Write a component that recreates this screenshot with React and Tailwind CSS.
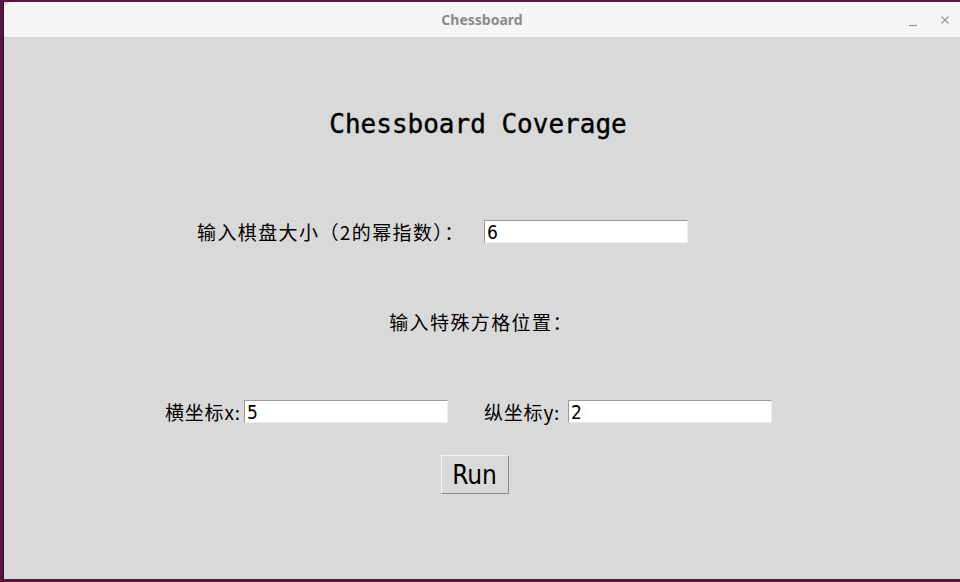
import React, { useState } from 'react';

const cjk = { fontFamily: '"Noto Sans CJK SC", "Noto Sans", sans-serif' };
const mono = { fontFamily: '"DejaVu Sans Mono", "Liberation Mono", monospace' };
const narrow = { fontFamily: '"Liberation Sans Narrow", "DejaVu Sans Condensed", "Liberation Sans", sans-serif' };

const Entry = ({ value, onChange, className }) => (
  <input
    type="text"
    value={value}
    onChange={(e) => onChange(e.target.value)}
    style={narrow}
    className={`h-[23px] w-[204px] bg-white border border-t-[#9a9a9a] border-l-[#9a9a9a] border-r-[#ececec] border-b-[#ececec] px-[2px] text-[19px] leading-none text-black outline-none ${className || ''}`}
  />
);

const TitleBar = () => (
  <div className="relative flex h-[36px] items-center justify-center rounded-tl-[8px] border-b border-[#d6d2cd] bg-[#f6f5f4]">
    <span className="text-[14px] font-bold text-[#8a8a8a]" style={{ fontFamily: '"Noto Sans", "DejaVu Sans", sans-serif' }}>
      Chessboard
    </span>
    <div className="absolute right-[10px] top-0 flex h-full items-center gap-[22px]">
      <svg width="10" height="10" viewBox="0 0 10 10" className="mt-[4px]">
        <path d="M1 8.5h8" stroke="#9a9a9a" strokeWidth="1.2" />
      </svg>
      <svg width="10" height="10" viewBox="0 0 10 10">
        <path d="M1.5 1.5l7 7M8.5 1.5l-7 7" stroke="#9a9a9a" strokeWidth="1.2" />
      </svg>
    </div>
  </div>
);

export default function App() {
  const [size, setSize] = useState('6');
  const [x, setX] = useState('5');
  const [y, setY] = useState('2');

  return (
    <div className="h-[582px] w-[960px] overflow-hidden bg-[#571640] pl-[3px] pt-[2px]">
      <div className="flex h-[577px] flex-col border-l border-[#3a0e2b] bg-[#d9d9d9]">
        <TitleBar />

        <div className="flex flex-col">
          <div
            className="mt-[71px] h-[30px] pr-[8px] text-center text-[26px] leading-[30px] text-black [-webkit-text-stroke:0.4px_black]"
            style={mono}
          >
            Chessboard Coverage
          </div>

          <div className="mt-[81px] flex h-[23px] items-center pl-[193px]">
            <span className="w-[287px] text-[19px] leading-none tracking-[1.4px] text-black" style={cjk}>
              输入棋盘大小（2的幂指数）：
            </span>
            <Entry value={size} onChange={setSize} />
          </div>

          <div className="mt-[66px] flex h-[24px] items-center justify-center pr-[2px]">
            <span className="text-[19px] leading-none tracking-[1.4px] text-black" style={cjk}>
              输入特殊方格位置：
            </span>
          </div>

          <div className="mt-[67px] flex h-[23px] items-center pl-[161px]">
            <span className="w-[79px] text-[19px] leading-none tracking-[0.8px] text-black" style={cjk}>
              横坐标x:
            </span>
            <Entry value={x} onChange={setX} />
            <span className="ml-[36px] w-[84px] text-[19px] leading-none tracking-[0.8px] text-black" style={cjk}>
              纵坐标y:
            </span>
            <Entry value={y} onChange={setY} />
          </div>

          <div className="mt-[32px] flex justify-center pr-[15px]">
            <button
              className="flex h-[39px] w-[68px] items-center justify-center border border-t-[#f4f4f4] border-l-[#f4f4f4] border-r-[#8a8a8a] border-b-[#8a8a8a] bg-[#d9d9d9] text-[26px] leading-none text-black"
              style={narrow}
            >
              Run
            </button>
          </div>
        </div>
      </div>
    </div>
  );
}
